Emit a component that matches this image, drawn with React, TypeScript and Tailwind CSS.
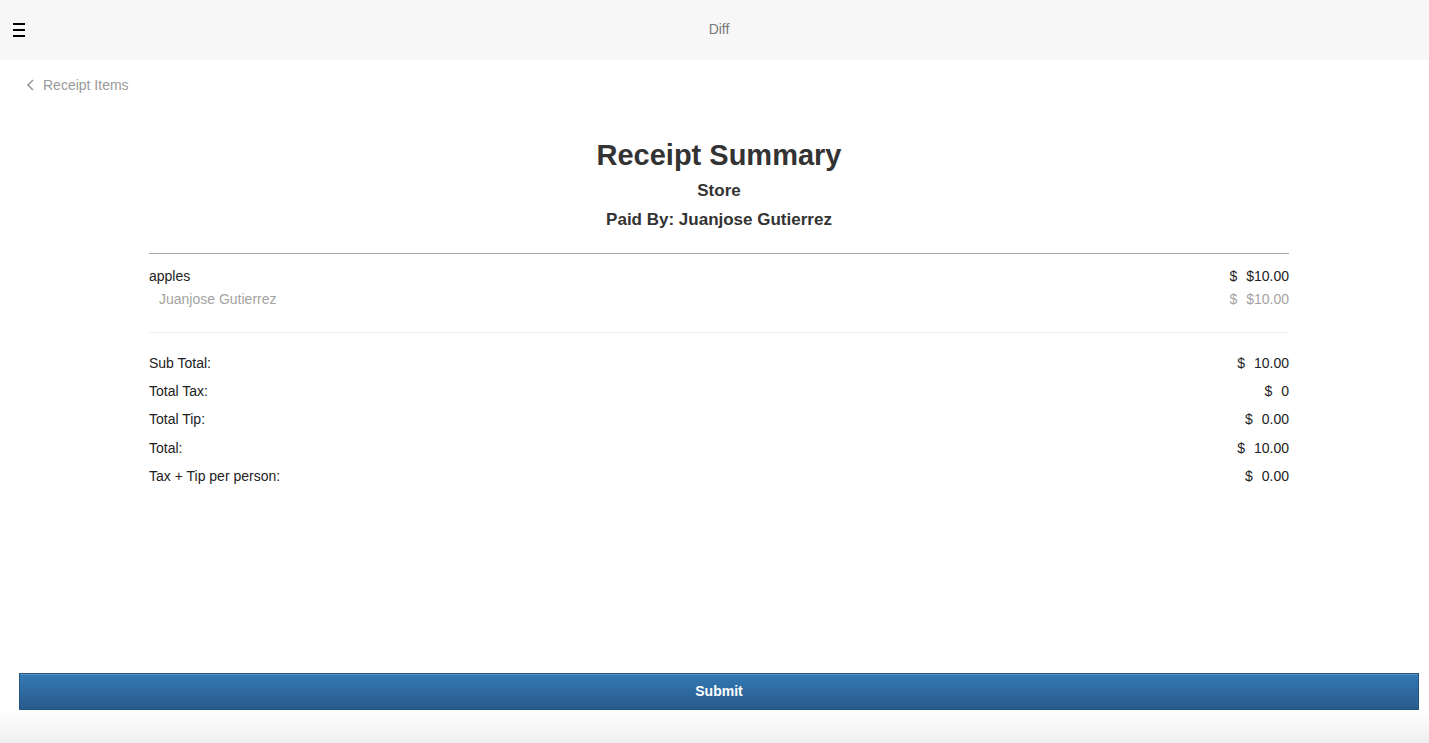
const items = [
  { name: 'apples', price: '$10.00', people: [{ name: 'Juanjose Gutierrez', price: '$10.00' }] },
];

const summary = [
  { label: 'Sub Total:', value: '10.00' },
  { label: 'Total Tax:', value: '0' },
  { label: 'Total Tip:', value: '0.00' },
  { label: 'Total:', value: '10.00' },
  { label: 'Tax + Tip per person:', value: '0.00' },
];

function Hamburger() {
  return (
    <div className="flex flex-col gap-[4px] w-[12px]">
      <span className="block h-[2px] bg-black" />
      <span className="block h-[2px] bg-black" />
      <span className="block h-[2px] bg-black" />
    </div>
  );
}

function Money({ value, muted }: { value: string; muted?: boolean }) {
  return (
    <div className={`flex gap-[9px] ${muted ? 'text-[#a3a3a3]' : 'text-[#222]'}`}>
      <span>$</span>
      <span>{value}</span>
    </div>
  );
}

export default function App() {
  return (
    <div className="min-h-screen flex flex-col bg-white font-['Liberation_Sans',Arial,sans-serif] text-[14px] text-[#222]">
      <header className="h-[60px] bg-[#f7f7f7] flex items-center pl-[13px] pb-px">
        <Hamburger />
        <div className="flex-1 text-center text-[#777]">Diff</div>
        <div className="w-[16px]" />
      </header>

      <a className="mt-[15px] ml-[27px] h-[20px] flex items-center gap-[9px] text-[#9a9a9a] w-fit cursor-pointer">
        <svg width="7" height="12" viewBox="0 0 7 12" fill="none">
          <path d="M6 1 L1 6 L6 11" stroke="#9a9a9a" strokeWidth="1.6" />
        </svg>
        <span>Receipt Items</span>
      </a>

      <main className="w-[1140px] ml-[149px]">
        <h1 className="mt-[43px] text-center text-[29px] leading-[34px] font-bold text-[#333]">Receipt Summary</h1>
        <h2 className="mt-[7px] text-center text-[17px] leading-[24px] font-bold text-[#333]">Store</h2>
        <h2 className="mt-[5px] text-center text-[17px] leading-[24px] font-bold text-[#333]">Paid By: Juanjose Gutierrez</h2>

        <div className="mt-[21px] h-px bg-[#a8a8a8]" />

        {items.map((item) => (
          <div key={item.name} className="mt-[12px]">
            <div className="flex justify-between leading-[20px]">
              <span>{item.name}</span>
              <Money value={item.price} />
            </div>
            {item.people.map((p) => (
              <div key={p.name} className="mt-[3px] flex justify-between leading-[20px]">
                <span className="pl-[10px] text-[#a3a3a3]">{p.name}</span>
                <Money value={p.price} muted />
              </div>
            ))}
          </div>
        ))}

        <div className="mt-[23px] h-px bg-[#ececec]" />

        <div className="mt-[16px] flex flex-col">
          {summary.map((row, i) => (
            <div key={row.label} className={`flex justify-between items-center ${i === 2 ? 'h-[29px]' : 'h-[28px]'}`}>
              <span>{row.label}</span>
              <Money value={row.value} />
            </div>
          ))}
        </div>
      </main>

      <div className="flex-1" />

      <footer className="flex flex-col">
        <div className="pl-[19px] pr-[10px]">
          <button className="w-full h-[37px] border border-[#245582] bg-gradient-to-b from-[#3479b5] to-[#285b8b] shadow-[inset_0_1px_0_rgba(255,255,255,0.2)] text-white font-bold text-[14px]">
            Submit
          </button>
        </div>
        <div className="h-[33px] bg-gradient-to-b from-white to-[#efefef]" />
      </footer>
    </div>
  );
}
